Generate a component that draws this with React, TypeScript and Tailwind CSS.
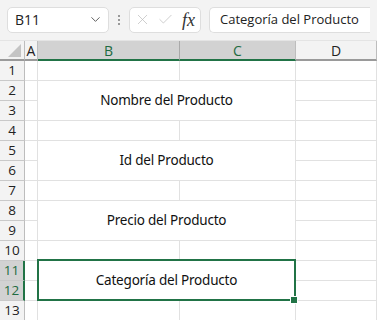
import { ChevronDown, X, Check } from "lucide-react";

const font = { fontFamily: '"Open Sans", "Noto Sans", sans-serif' };

const rows = Array.from({ length: 13 }, (_, i) => i + 1);
const merged: Record<number, string> = {
	2: "Nombre del Producto",
	5: "Id del Producto",
	8: "Precio del Producto",
	11: "Categoría del Producto",
};

export default function App() {
	const cells: React.ReactNode[] = [];

	rows.forEach((r) => {
		const sel = r === 11 || r === 12;
		cells.push(
			<div
				key={`h${r}`}
				className={`flex items-center justify-center text-[13.5px] border-b border-[#c9c9c9] ${
					sel
						? "bg-[#d2d2d2] text-[#1e6b41] border-r-2 border-r-[#217346]"
						: "bg-[#f3f3f3] text-[#222] border-r border-r-[#bdbdbd]"
				}`}
				style={{ gridRow: r + 1, gridColumn: 1 }}
			>
				{r}
			</div>
		);
		cells.push(
			<div
				key={`a${r}`}
				className="bg-white border-r border-b border-[#e1e1e1]"
				style={{ gridRow: r + 1, gridColumn: 2 }}
			/>
		);
		if (merged[r]) {
			cells.push(
				<div
					key={`m${r}`}
					className="relative bg-white border-r border-b border-[#e1e1e1] flex items-center justify-center text-[13.5px] text-[#111]"
					style={{ gridRow: `${r + 1} / span 2`, gridColumn: "3 / span 2", fontFamily: '"Noto Sans", sans-serif' }}
				>
					<span className="tracking-[-0.2px]">{merged[r]}</span>
					{r === 11 && (
						<>
							<div className="absolute -top-[2px] -left-[1px] -right-[1px] -bottom-[1px] border-2 border-[#217346]" />
							<div className="absolute -right-[2px] -bottom-[3px] w-[6px] h-[6px] bg-[#217346] outline outline-1 outline-white" />
						</>
					)}
				</div>
			);
		} else if (!merged[r - 1]) {
			cells.push(
				<div
					key={`b${r}`}
					className="bg-white border-r border-b border-[#e1e1e1]"
					style={{ gridRow: r + 1, gridColumn: 3 }}
				/>
			);
			cells.push(
				<div
					key={`c${r}`}
					className="bg-white border-r border-b border-[#e1e1e1]"
					style={{ gridRow: r + 1, gridColumn: 4 }}
				/>
			);
		}
		cells.push(
			<div
				key={`d${r}`}
				className="bg-white border-r border-b border-[#e1e1e1]"
				style={{ gridRow: r + 1, gridColumn: 5 }}
			/>
		);
	});

	return (
		<div className="w-[377px] h-[320px] overflow-hidden bg-[#f3f3f3]" style={font}>
			{/* toolbar */}
			<div className="h-[40px] flex items-center px-[7px] gap-[8px] pb-[1px]">
				<div className="w-[102px] h-[26px] bg-white rounded-[5px] border border-[#dedede] flex items-center justify-between pl-[7px] pr-[5px]">
					<span className="text-[14px] text-[#222]">B11</span>
					<ChevronDown size={15} strokeWidth={1.5} className="text-[#555]" />
				</div>
				<div className="flex flex-col gap-[2px] w-[4px] items-center">
					<span className="w-[2px] h-[2px] bg-[#999]" />
					<span className="w-[2px] h-[2px] bg-[#999]" />
					<span className="w-[2px] h-[2px] bg-[#999]" />
				</div>
				<div className="w-[72px] h-[26px] bg-white rounded-[5px] border border-[#dedede] flex items-center pl-[4px] gap-[6px]">
					<X size={17} strokeWidth={1} className="text-[#bbb]" />
					<Check size={17} strokeWidth={1} className="text-[#bbb]" />
					<span
						className="text-[18px] italic text-[#333] leading-none ml-[2px]"
						style={{ fontFamily: '"Liberation Serif", serif' }}
					>
						fx
					</span>
				</div>
				<div className="flex-1 h-[26px] bg-white rounded-l-[5px] border border-r-0 border-[#dedede] flex items-center pl-[10px]">
					<span className="text-[13px] text-[#222]">Categoría del Producto</span>
				</div>
			</div>

			{/* sheet */}
			<div className="grid grid-cols-[25px_13px_142px_116px_81px] grid-rows-[20px_repeat(13,20px)] border-t border-[#e4e4e4]">
				<div className="relative bg-[#f3f3f3] border-r border-b-2 border-r-[#bdbdbd] border-b-[#9a9a9a]">
					<div className="absolute right-[3px] bottom-[2px] w-0 h-0 border-l-[13px] border-l-transparent border-b-[13px] border-b-[#c4c4c4]" />
				</div>
				<div className="bg-[#f3f3f3] border-r border-[#bdbdbd] border-b-2 border-b-[#9a9a9a] flex items-center justify-center text-[14px] text-[#222]">
					A
				</div>
				<div className="bg-[#d2d2d2] border-r border-[#a9a9a9] border-b-2 border-b-[#217346] flex items-center justify-center text-[14px] text-[#1e6b41]">
					B
				</div>
				<div className="bg-[#d2d2d2] border-r border-[#bdbdbd] border-b-2 border-b-[#217346] flex items-center justify-center text-[14px] text-[#1e6b41]">
					C
				</div>
				<div className="bg-[#f3f3f3] border-r border-[#bdbdbd] border-b-2 border-b-[#9a9a9a] flex items-center justify-center text-[14px] text-[#222]">
					D
				</div>
				{cells}
			</div>
		</div>
	);
}
